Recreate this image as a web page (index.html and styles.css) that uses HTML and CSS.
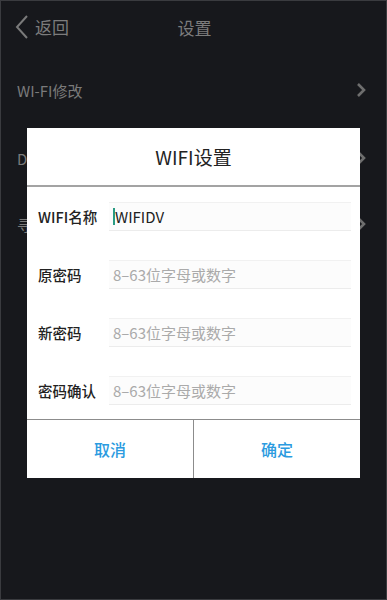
FILE: index.html
```html
<!DOCTYPE html>
<html lang="zh">
<head>
  <meta charset="UTF-8">
  <meta name="viewport" content="width=device-width, initial-scale=1.0">
  <title>设置</title>
  <link rel="stylesheet" href="styles.css">
</head>
<body>
  <div class="screen">
    <div class="topbar">
      <div class="back">
        <svg class="back-icon" width="14" height="24" viewBox="0 0 14 24"><path d="M12 1 L2 12 L12 23" fill="none" stroke="#7a7a7a" stroke-width="2"/></svg>
        <span>返回</span>
      </div>
      <div class="title">设置</div>
    </div>

    <div class="list">
      <div class="item"><span>WI-FI修改</span><svg class="arrow" width="10" height="16" viewBox="0 0 10 16"><path d="M2 2 L8 8 L2 14" fill="none" stroke="#6e6e6e" stroke-width="2.6"/></svg></div>
      <div class="item"><span>D</span><svg class="arrow" width="10" height="16" viewBox="0 0 10 16"><path d="M2 2 L8 8 L2 14" fill="none" stroke="#6e6e6e" stroke-width="2.6"/></svg></div>
      <div class="item"><span>寻</span><svg class="arrow" width="10" height="16" viewBox="0 0 10 16"><path d="M2 2 L8 8 L2 14" fill="none" stroke="#6e6e6e" stroke-width="2.6"/></svg></div>
    </div>

    <div class="dialog">
      <div class="dialog-title">WIFI设置</div>
      <div class="form">
        <div class="row">
          <label>WIFI名称</label>
          <div class="field value"><i class="cursor"></i>WIFIDV</div>
        </div>
        <div class="row">
          <label>原密码</label>
          <div class="field">8–63位字母或数字</div>
        </div>
        <div class="row">
          <label>新密码</label>
          <div class="field">8–63位字母或数字</div>
        </div>
        <div class="row">
          <label>密码确认</label>
          <div class="field">8–63位字母或数字</div>
        </div>
      </div>
      <div class="buttons">
        <button>取消</button>
        <button>确定</button>
      </div>
    </div>
  </div>
</body>
</html>
```

FILE: styles.css
```css
html, body {
  margin: 0;
  padding: 0;
}
body {
  font-family: "Noto Sans CJK SC", "Noto Sans", sans-serif;
  background: #16171b;
}
.screen {
  position: relative;
  width: 387px;
  height: 600px;
  box-sizing: border-box;
  border: 1px solid #3a3b3f;
  background: #17181c;
  overflow: hidden;
}
.topbar {
  position: relative;
  height: 54px;
  display: flex;
  align-items: center;
  justify-content: center;
}
.back {
  position: absolute;
  left: 14px;
  top: 13px;
  display: flex;
  align-items: center;
  gap: 6px;
  color: #7c7c7c;
  font-size: 17px;
}
.title {
  color: #7c7c7c;
  font-size: 17px;
  margin-left: 2px;
  margin-bottom: 2px;
}
.list {
  padding: 0 20px 0 16px;
}
.item {
  height: 66px;
  display: flex;
  align-items: center;
  justify-content: space-between;
  color: #7a7a7a;
  font-size: 15px;
}
.item:first-child {
  height: 70px;
}
.dialog {
  position: absolute;
  left: 26px;
  top: 127px;
  width: 333px;
  background: #fff;
}
.dialog-title {
  height: 57px;
  display: flex;
  align-items: center;
  justify-content: center;
  font-size: 19px;
  color: #222;
  border-bottom: 2px solid #a3a3a3;
}
.form {
  padding: 0 9px 0 11px;
}
.row {
  height: 58px;
  display: flex;
  align-items: center;
}
.row label {
  width: 71px;
  font-size: 14.5px;
  font-weight: 500;
  color: #222;
  white-space: nowrap;
}
.field {
  flex: 1;
  height: 27px;
  display: flex;
  align-items: center;
  padding-left: 4px;
  background: #fcfcfc;
  border-top: 1px solid #f1f1f1;
  border-bottom: 1px solid #ececec;
  color: #aaa;
  font-size: 15px;
}
.field.value {
  color: #222;
}
.cursor {
  display: inline-block;
  width: 2px;
  height: 17px;
  background: #2a9b83;
}
.buttons {
  display: flex;
  border-top: 1px solid #8c8c8c;
}
.buttons button {
  flex: 1;
  height: 58px;
  border: none;
  background: #fff;
  color: #2b9be0;
  font-family: inherit;
  font-size: 16px;
  font-weight: 500;
}
.buttons button + button {
  border-left: 1px solid #8c8c8c;
}
```
